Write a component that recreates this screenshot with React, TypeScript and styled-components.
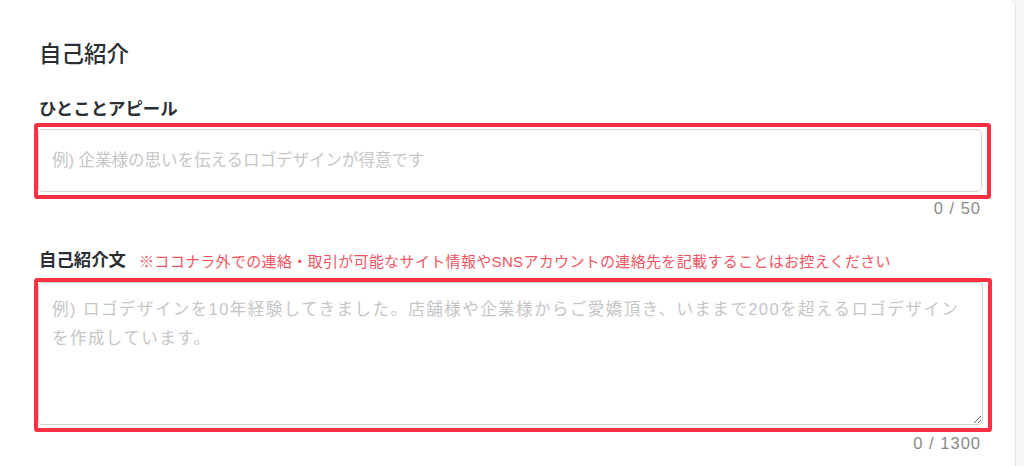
import styled, { createGlobalStyle } from 'styled-components';

const GlobalStyle = createGlobalStyle`
    html, body {
        margin: 0;
        padding: 0;
        background: #f6f6f6;
    }

    body {
        font-family: "Liberation Sans", "Noto Sans CJK JP", sans-serif;
        color: #333;
    }
`;

function App() {
    return (
        <Page>
            <GlobalStyle />
            <Card>
                <Title>自己紹介</Title>

                <Field>
                    <Label>ひとことアピール</Label>
                    <Highlight $gap={1}>
                        <TextInput
                            type="text"
                            placeholder="例) 企業様の思いを伝えるロゴデザインが得意です"
                        />
                    </Highlight>
                    <Counter>0 / 50</Counter>
                </Field>

                <Field $offset={30}>
                    <LabelRow>
                        <Label>自己紹介文</Label>
                        <Notice>
                            ※ココナラ外での連絡・取引が可能なサイト情報やSNSアカウントの連絡先を記載することはお控えください
                        </Notice>
                    </LabelRow>
                    <Highlight $gap={5}>
                        <TextArea placeholder="例) ロゴデザインを10年経験してきました。店舗様や企業様からご愛嬌頂き、いままで200を超えるロゴデザインを作成しています。" />
                    </Highlight>
                    <Counter $offset={2}>0 / 1300</Counter>
                </Field>
            </Card>
        </Page>
    );
}

export default App;

const Page = styled.div`
    height: 466px;
    overflow: hidden;
    padding-right: 8px;
`;

const Card = styled.section`
    margin-left: -8px;
    height: 480px;
    padding: 38px 0 0 46px;
    background: #fff;
    border: 1px solid #e6e6e6;
    border-top: none;
    border-left: none;
    border-radius: 0 7px 0 0;
    box-sizing: border-box;
`;

const Title = styled.h2`
    margin: 0 0 0 1px;
    font-size: 22.5px;
    font-weight: 500;
    line-height: 33px;
    color: #2b2f33;
`;

const Field = styled.div<{ $offset?: number }>`
    display: flex;
    flex-direction: column;
    width: 944px;
    margin-top: ${p => p.$offset ?? 25}px;
`;

const LabelRow = styled.div`
    display: flex;
    align-items: center;
    gap: 13px;
`;

const Label = styled.label`
    padding-left: 1px;
    font-size: 17.4px;
    font-weight: 700;
    line-height: 26px;
    color: #2b2f33;
    white-space: nowrap;
`;

const Notice = styled.span`
    font-size: 15px;
    letter-spacing: 0.33px;
    color: #f0555f;
    white-space: nowrap;
`;

// red annotation frame drawn round the highlighted inputs
const Highlight = styled.div<{ $gap: number }>`
    display: flex;
    margin: ${p => p.$gap}px 0 0 -4px;
    padding: 2px 5px 3px 0;
    border: 4px solid #fb3043;
    border-radius: 3px;
    align-self: flex-start;
`;

const TextInput = styled.input`
    width: 944px;
    height: 63px;
    padding: 0 13px;
    box-sizing: border-box;
    border: 1px solid #d4d4d4;
    border-radius: 5px;
    font-family: "Liberation Sans", "Noto Sans CJK JP", sans-serif;
    font-size: 16.5px;
    color: #333;
    outline: none;

    &::placeholder {
        color: #c6c6c6;
    }
`;

const TextArea = styled.textarea`
    width: 945px;
    height: 143px;
    margin: -2px 0 0;
    padding: 12px 13px;
    box-sizing: border-box;
    border: 1px solid #cfcfcf;
    border-radius: 4px;
    font-family: "Liberation Sans", "Noto Sans CJK JP", sans-serif;
    font-size: 16.5px;
    line-height: 28.5px;
    letter-spacing: 1.45px;
    color: #333;
    outline: none;
    resize: vertical;

    &::placeholder {
        color: #c6c6c6;
    }
`;

const Counter = styled.div<{ $offset?: number }>`
    margin-top: ${p => p.$offset ?? 0}px;
    padding-right: 1px;
    font-size: 16.5px;
    line-height: 18px;
    letter-spacing: 1px;
    color: #8a8a8a;
    text-align: right;
`;
